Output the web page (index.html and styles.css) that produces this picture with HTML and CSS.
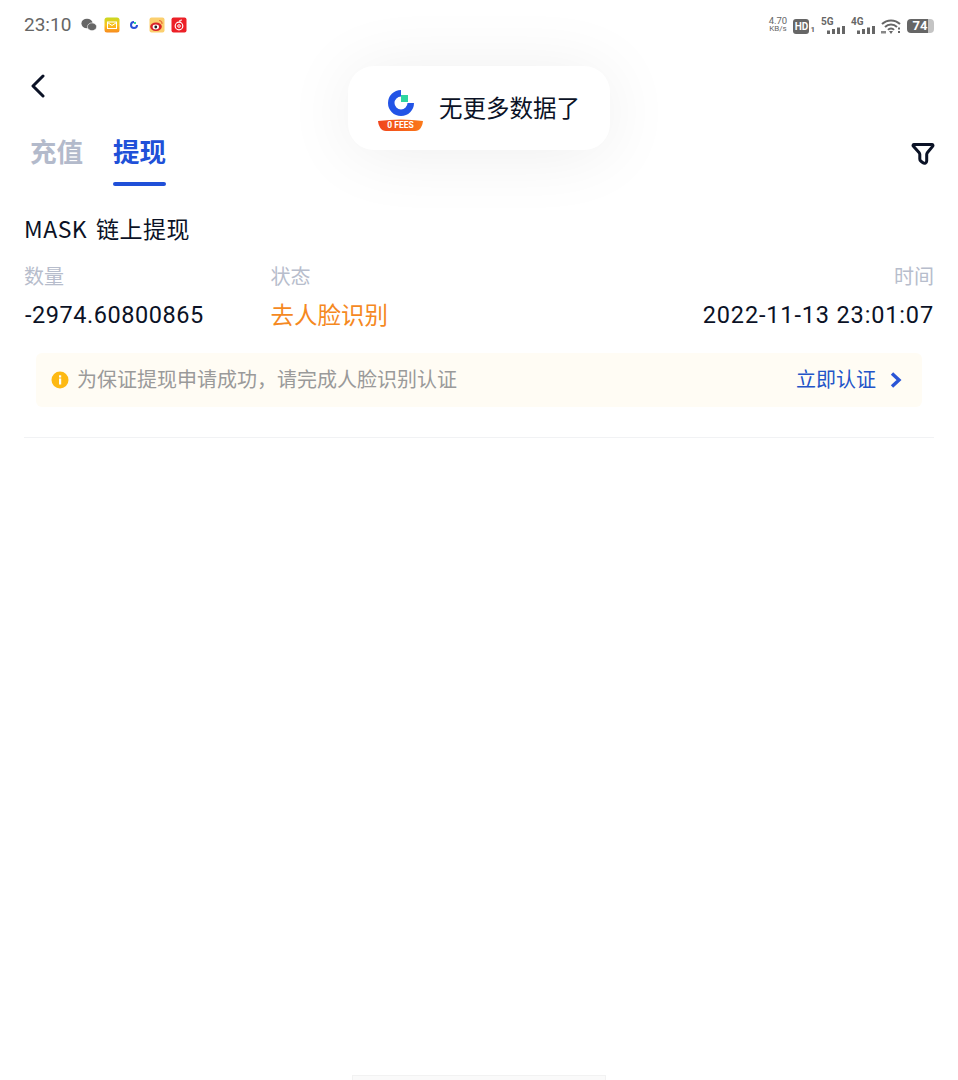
FILE: index.html
```html
<!DOCTYPE html>
<html lang="zh-CN">
<head>
<meta charset="utf-8">
<title>提现记录</title>
<link rel="stylesheet" href="styles.css">
</head>
<body>
<div class="page">
  <header class="status">
    <div class="status-left">
      <span class="clock">23:10</span>
      <svg class="notif" viewBox="0 0 16 16" width="16" height="16"><ellipse cx="6" cy="6.5" rx="5.6" ry="4.8" fill="#666"/><ellipse cx="11" cy="9.8" rx="4.6" ry="3.9" fill="#666" stroke="#fff" stroke-width=".6"/></svg>
      <svg class="notif" viewBox="0 0 16 16" width="16" height="16"><defs><linearGradient id="mailg" x1="0" y1="0" x2="0" y2="1"><stop offset="0" stop-color="#c8d820"/><stop offset=".5" stop-color="#fbc31c"/><stop offset="1" stop-color="#f78a1e"/></linearGradient></defs><rect width="15" height="15" x=".5" y=".5" rx="2.5" fill="url(#mailg)"/><rect x="3.5" y="5" width="9" height="6.5" fill="none" stroke="#fff" stroke-width="1"/><path d="M3.5 5.5 8 8.5l4.500-3" fill="none" stroke="#fff" stroke-width="1"/></svg>
      <svg class="notif" viewBox="0 0 16 16" width="16" height="16"><path d="M8 4A4 4 0 1 0 12 8H10A2 2 0 1 1 8 6Z" fill="#2a50d8"/><rect x="8" y="5" width="2" height="2" fill="#2fd6a0"/></svg>
      <svg class="notif" viewBox="0 0 16 16" width="16" height="16"><rect width="15" height="15" x=".5" y=".5" rx="2" fill="#fbcf6e"/><ellipse cx="7" cy="9.800" rx="5.800" ry="4.200" fill="#d8232a"/><ellipse cx="6.800" cy="10" rx="3.200" ry="2.400" fill="#fff"/><circle cx="6.800" cy="10" r="1.400" fill="#222"/><path d="M10 3.500a3 3 0 0 1 3 3.500" fill="none" stroke="#e8703a" stroke-width="1.200"/></svg>
      <svg class="notif" viewBox="0 0 16 16" width="16" height="16"><rect width="15" height="15" x=".5" y=".5" rx="2" fill="#ec2027"/><circle cx="8" cy="9" r="3.800" fill="none" stroke="#fff" stroke-width="1.200"/><circle cx="8" cy="9" r="1.300" fill="none" stroke="#fff" stroke-width="1"/><path d="M9 5.200 8.600 3.500l2.400-.5" fill="none" stroke="#fff" stroke-width="1"/></svg>
    </div>
    <div class="status-right">
      <span class="speed"><span>4.70</span><span class="unit">KB/s</span></span>
      <span class="hd"><span class="hd-box">HD</span><span class="hd-sub">1</span></span>
      <span class="net"><span class="net-label">5G</span><svg viewBox="0 0 18 8" width="18" height="8"><rect x="0" y="4.500" width="3" height="3.500" fill="#666"/><rect x="5" y="3" width="3" height="5" fill="#666"/><rect x="10" y="1.500" width="3" height="6.500" fill="#666"/><rect x="15" y="0" width="3" height="8" fill="#666"/></svg></span>
      <span class="net"><span class="net-label">4G</span><svg viewBox="0 0 18 8" width="18" height="8"><rect x="0" y="4.500" width="3" height="3.500" fill="#666"/><rect x="5" y="3" width="3" height="5" fill="#666"/><rect x="10" y="1.500" width="3" height="6.500" fill="#666"/><rect x="15" y="0" width="3" height="8" fill="#666"/></svg></span>
      <svg class="wifi" viewBox="0 0 20 15" width="20" height="15"><path d="M1 5a13 13 0 0 1 18 0M4 8a8.500 8.500 0 0 1 12 0M7 10.800a4 4 0 0 1 6 0" fill="none" stroke="#666" stroke-width="2"/><path d="M8 12h4l-2 3z" fill="#666"/><rect x="0" y="12" width="5" height="2.500" fill="#888"/><rect x="17" y="8.500" width="2" height="2" fill="#666"/><rect x="17" y="12" width="2" height="2" fill="#666"/></svg>
      <span class="battery"><span class="battery-num">74</span></span>
    </div>
  </header>

  <nav class="back-row">
    <svg viewBox="0 0 16 24" width="16" height="24"><path d="M13 2 3 12l10 10" fill="none" stroke="#0b1226" stroke-width="3" stroke-linecap="round" stroke-linejoin="round"/></svg>
  </nav>

  <div class="tabs">
    <div class="tab">充值</div>
    <div class="tab tab-active">提现</div>
    <svg class="filter" viewBox="0 0 24 24" width="24" height="24"><path d="M3 2.500h18a1 1 0 0 1 .8 1.600L16.500 10.500c-.6.700-.8 1.200-.8 2V19a2.300 2.300 0 0 1-3.700 1.800l-2-1.500c-.8-.6-1.200-1.200-1.200-2.300v-4.500c0-.8-.2-1.300-.8-2L2.200 4.100A1 1 0 0 1 3 2.500z" fill="none" stroke="#0b1226" stroke-width="3" stroke-linejoin="round"/></svg>
  </div>

  <section class="record">
    <h2 class="record-title">MASK 链上提现</h2>
    <div class="cols labels">
      <span class="col-a">数量</span>
      <span class="col-b">状态</span>
      <span class="col-c">时间</span>
    </div>
    <div class="cols values">
      <span class="col-a amount">-2974.60800865</span>
      <span class="col-b status-link">去人脸识别</span>
      <span class="col-c datetime">2022-11-13 23:01:07</span>
    </div>
    <div class="notice">
      <svg class="notice-icon" viewBox="0 0 18 18" width="18" height="18"><circle cx="9" cy="9" r="8.500" fill="#fdb913"/><rect x="8" y="7.500" width="2.200" height="6" fill="#fff"/><rect x="8" y="4.300" width="2.200" height="2.200" fill="#fff"/></svg>
      <span class="notice-text">为保证提现申请成功，请完成人脸识别认证</span>
      <span class="notice-action">立即认证</span>
      <svg class="notice-arrow" viewBox="0 0 14 18" width="14" height="18"><path d="M3 2.500 10 9l-7 6.500" fill="none" stroke="#2a55d6" stroke-width="3.400"/></svg>
    </div>
  </section>

  <div class="home-bar"></div>

  <div class="toast">
    <svg class="toast-logo" viewBox="0 0 46 42" width="46" height="42">
      <defs><linearGradient id="feeg" x1="0" y1="0" x2="1" y2="0"><stop offset="0" stop-color="#f0441c"/><stop offset="1" stop-color="#fb7a1a"/></linearGradient></defs>
      <path d="M23 0A13 13 0 1 0 36 13H29.500A6.500 6.500 0 1 1 23 6.500Z" fill="#2354e6"/>
      <rect x="23" y="5" width="7" height="7" fill="#2fd6a0"/>
      <path d="M0 31Q23 28 45 31C44.500 36 42 41 37 41H8C3 41 .5 36 0 31Z" fill="url(#feeg)"/>
    </svg>
    <span class="toast-fee">0 FEES</span>
    <span class="toast-text">无更多数据了</span>
  </div>
</div>
</body>
</html>
```
FILE: styles.css
```css
* { box-sizing: border-box; }
html, body { margin: 0; padding: 0; background: #fff; }
body { font-family: "Noto Sans CJK SC", "Noto Sans", sans-serif; color: #0b1226; }
.page { position: relative; width: 958px; height: 1080px; overflow: hidden; display: flex; flex-direction: column; }

.status { height: 50px; padding: 0 24px; display: flex; justify-content: space-between; align-items: center; flex: none; }
.status-left { display: flex; align-items: center; }
.clock { font: 400 19px/24px Roboto, sans-serif; color: #666; margin-right: 9px; width: 48px; }
.notif { margin-right: 6.500px; }
.status-right { display: flex; align-items: center; gap: 6px; color: #666; margin-top: 2px; }
.speed { display: flex; flex-direction: column; align-items: center; font: 400 9.500px/8px Roboto, sans-serif; width: 19px; margin-top: -2px; }
.unit { font-size: 8px; }
.hd { display: flex; align-items: flex-end; }
.hd-box { width: 16px; height: 15px; border-radius: 3px; background: #666; color: #fff; font: 700 10px/15px Roboto, sans-serif; text-align: center; }
.hd-sub { font: 700 8px/8px Roboto, sans-serif; margin-left: 1px; }
.net { position: relative; width: 24px; height: 16px; display: flex; align-items: flex-end; justify-content: flex-end; }
.net-label { position: absolute; left: 0; top: -1px; font: 700 10px/10px Roboto, sans-serif; }
.battery { width: 27px; height: 14px; border-radius: 4px; background: linear-gradient(90deg, #666 0 78%, #c4c4c4 78% 100%); display: flex; align-items: center; justify-content: center; padding-right: 1px; }
.battery-num { font: 700 13px/14px Roboto, sans-serif; color: #fff; }

.back-row { height: 62px; padding: 24px 0 0 30px; flex: none; }

.tabs { height: 99px; padding: 0 24px 0 30px; display: flex; align-items: flex-start; gap: 30px; flex: none; position: relative; }
.tab { font-size: 26.500px; line-height: 36px; margin-top: 21px; font-weight: 700; color: #b3bacb; }
.tab-active { color: #2050d8; position: relative; }
.tab-active::after { content: ""; position: absolute; left: 0; right: 0; top: 49px; height: 4px; background: #2050d8; border-radius: 2px; }
.filter { position: absolute; right: 23px; top: 30px; }

.record { padding: 0 24px; }
.record-title { margin: 0; padding-top: 1px; font-size: 23px; line-height: 32px; font-weight: 400; height: 32px; letter-spacing: .5px; word-spacing: 3px; }
.cols { display: grid; grid-template-columns: 246.500px 1fr auto; }
.labels { margin-top: 19px; font-size: 20px; line-height: 28px; color: #b7bdcc; }
.values { margin-top: 9px; font-size: 23.500px; line-height: 32px; font-family: Roboto, "Noto Sans CJK SC", sans-serif; }
.amount { letter-spacing: .55px; padding-left: 1px; }
.datetime { letter-spacing: .85px; }
.status-link { color: #f5891f; font-family: "Noto Sans CJK SC", sans-serif; line-height: 30px; }
.notice { margin: 22px 12px 0; height: 54px; border-radius: 6px; background: #fffcf4; display: flex; align-items: center; padding: 0 17px 0 15px; }
.notice-icon { flex: none; margin-right: 8px; }
.notice-text { flex: 1; font-size: 20px; color: #9a9a9a; margin-bottom: 3px; }
.notice-action { font-size: 20px; color: #2354c8; margin-bottom: 3px; }
.notice-arrow { margin-left: 13px; margin-right: 2px; }
.record::after { content: ""; display: block; height: 1px; background: #f1f2f4; margin-top: 30px; }

.home-bar { position: absolute; left: 352px; top: 1075px; width: 254px; height: 5px; background: #fafafa; border: 1px solid #f2f2f2; border-bottom: 0; }

.toast { position: absolute; left: 348px; top: 66px; width: 262px; height: 84px; border-radius: 26px; background: #fff; box-shadow: 0 4px 70px rgba(0, 0, 0, .07); display: flex; align-items: center; padding-left: 30px; }
.toast-logo { flex: none; margin-top: 6px; }
.toast-fee { position: absolute; left: 30px; top: 54px; width: 45px; text-align: center; font: 700 8.500px/10px Roboto, sans-serif; color: #fff; }
.toast-text { margin-left: 15px; margin-bottom: 2px; font-size: 23.500px; color: #0b1226; }
```
